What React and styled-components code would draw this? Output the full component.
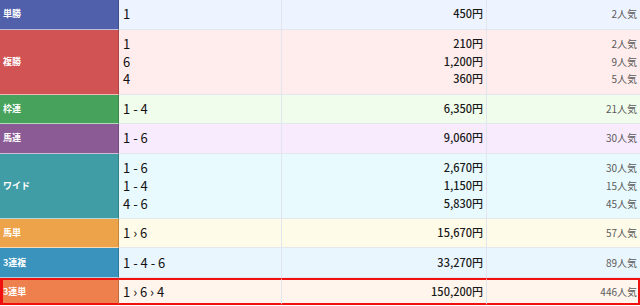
import React from 'react'
import styled, { createGlobalStyle } from 'styled-components'

const rows = [
  { label: '単勝', color: '#5160ab', bg: '#eef4ff', items: [['1', '450円', '2人気']] },
  {
    label: '複勝', color: '#d25353', bg: '#ffeded',
    items: [['1', '210円', '2人気'], ['6', '1,200円', '9人気'], ['4', '360円', '5人気']],
  },
  { label: '枠連', color: '#47a25b', bg: '#f1fdec', items: [['1 - 4', '6,350円', '21人気']] },
  { label: '馬連', color: '#8b5b95', bg: '#f9ebfe', items: [['1 - 6', '9,060円', '30人気']] },
  {
    label: 'ワイド', color: '#409da5', bg: '#e8fafe',
    items: [['1 - 6', '2,670円', '30人気'], ['1 - 4', '1,150円', '15人気'], ['4 - 6', '5,830円', '45人気']],
  },
  { label: '馬単', color: '#eda349', bg: '#fffbe9', items: [['1 › 6', '15,670円', '57人気']] },
  { label: '3連複', color: '#3a93bc', bg: '#e9f6fd', items: [['1 - 4 - 6', '33,270円', '89人気']] },
  { label: '3連単', color: '#ed804d', bg: '#fff5ed', items: [['1 › 6 › 4', '150,200円', '446人気']], hot: true },
]

const GlobalStyle = createGlobalStyle`
  body {
    margin: 0;
    background: #fff;
    font-family: "Noto Sans CJK JP", "Noto Sans", sans-serif;
  }
`

const Table = styled.table`
  width: 640px;
  table-layout: fixed;
  border-collapse: separate;
  border-spacing: 0;
`

const Cell = styled.td`
  background: ${p => p.$bg};
  border-bottom: 1px solid #e4e7ee;
  border-right: 1px solid #e1e5ee;
  padding: 5.4px 3px;
  line-height: 17.75px;
  vertical-align: middle;
  ${p => p.$hot && `
    border-top: 2px solid #f01010;
    border-bottom: 2px solid #f01010;
    padding-top: 3px;
    padding-bottom: 3px;
  `}
`

const Label = styled(Cell)`
  background: ${p => p.$color};
  border-right: 1px solid rgba(0, 0, 0, 0.18);
  border-bottom: 1px solid rgba(255, 255, 255, 0.6);
  color: #fff;
  font-size: 9px;
  font-weight: 700;
  padding-left: 3px;
  ${p => p.$hot && `
    border-left: 3px solid #f01010;
    border-bottom: 2px solid #f01010;
    padding-left: 0;
  `}
`

const Horse = styled(Cell)`
  font-size: 13px;
  color: #111;
  padding-left: 4px;
`

const Price = styled(Cell)`
  font-size: 11px;
  font-weight: 500;
  color: #1a1a1a;
  text-align: right;
`

const Pop = styled(Cell)`
  font-size: 10px;
  color: #5a5a5a;
  text-align: right;
  border-right: none;
  padding-right: 3px;
  ${p => p.$hot && `
    border-right: 2px solid #f01010;
    padding-right: 1px;
  `}
`

const Line = styled.div`
  white-space: nowrap;
`

const App = () => (
  <>
    <GlobalStyle />
    <Table>
      <colgroup>
        <col style={{ width: 119 }} />
        <col style={{ width: 163 }} />
        <col style={{ width: 205 }} />
        <col style={{ width: 153 }} />
      </colgroup>
      <tbody>
        {rows.map(r => (
          <tr key={r.label}>
            <Label $color={r.color} $hot={r.hot}>{r.label}</Label>
            <Horse $bg={r.bg} $hot={r.hot}>
              {r.items.map((it, i) => <Line key={i}>{it[0]}</Line>)}
            </Horse>
            <Price $bg={r.bg} $hot={r.hot}>
              {r.items.map((it, i) => <Line key={i}>{it[1]}</Line>)}
            </Price>
            <Pop $bg={r.bg} $hot={r.hot}>
              {r.items.map((it, i) => <Line key={i}>{it[2]}</Line>)}
            </Pop>
          </tr>
        ))}
      </tbody>
    </Table>
  </>
)

export default App
